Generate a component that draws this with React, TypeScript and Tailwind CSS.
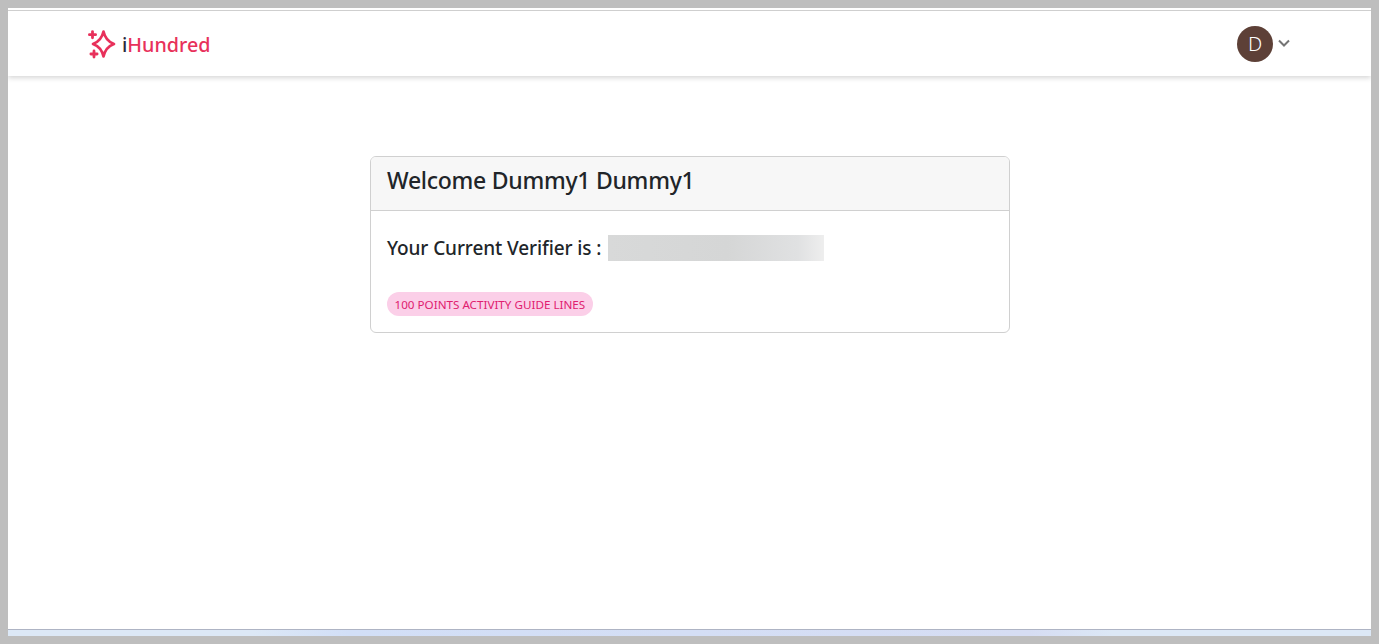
export default function App() {
  return (
    <div className="h-[644px] w-full border-8 border-[#bebebe] bg-white flex flex-col overflow-hidden font-['Noto_Sans',sans-serif] text-[#212529]">
      <header className="h-[68px] shrink-0 bg-white pt-[2px] shadow-[0_2px_5px_rgba(0,0,0,0.16)] relative z-10">
        <div className="border-t border-[#cfcfcf] h-[66px] pl-[79px] pr-[81px] flex items-center justify-between">
          <div className="flex items-center gap-[5px] text-[#e8315b]">
            <svg width="30" height="30" viewBox="0 0 30 30" fill="none" className="shrink-0">
              <path d="M16.5 2.5 C17.8 8.5 21 12.8 27 15 C21 17.2 17.8 21.5 16.5 27.5 C15.2 21.5 12 17.2 6 15 C12 12.8 15.2 8.5 16.5 2.5 Z" stroke="#e8315b" strokeWidth="2.7" strokeLinejoin="round" />
              <path d="M5.5 2.6 V8.8 M2.4 5.7 H8.6" stroke="#e8315b" strokeWidth="2.8" strokeLinecap="round" />
              <path d="M7 21.9 V28.1 M3.9 25 H10.1" stroke="#e8315b" strokeWidth="2.8" strokeLinecap="round" />
            </svg>
            <span className="text-[19.7px] leading-none font-medium mt-[3px]"><span className="text-[#2a2a3c]">i</span>Hundred</span>
          </div>
          <div className="flex items-center gap-[5px] mt-[1px]">
            <div className="w-9 h-9 rounded-full bg-[#5d4037] text-white flex items-center justify-center text-[20px] font-light">D</div>
            <svg width="12" height="8" viewBox="0 0 12 8" fill="none" className="-mt-[2px]">
              <path d="M1 1.5 L6 6.5 L11 1.5" stroke="#757575" strokeWidth="2" />
            </svg>
          </div>
        </div>
      </header>
      <main className="flex-1 flex flex-col items-center pt-[80px]">
        <section className="w-[640px] border border-[#d0d0d0] rounded-[6px] overflow-hidden bg-white">
          <div className="h-[54px] bg-[#f7f7f7] border-b border-[#d0d0d0] pl-[16.5px] pr-4 pb-[6px] flex items-center">
            <h1 className="text-[23px] tracking-[-0.27px] font-medium leading-none">Welcome Dummy1 Dummy1</h1>
          </div>
          <div className="px-4 pt-[24px] pb-[16px]">
            <div className="flex items-center h-[26px]">
              <span className="text-[19px] tracking-[-0.1px] font-medium w-[221px] pl-[0.5px]">Your Current Verifier is :</span>
              <div className="w-[216px] h-[26px] bg-[linear-gradient(90deg,#d8d9d9,#d5d6d6_55%,#e0e1e2_88%,#eeeeee)]"></div>
            </div>
            <div className="mt-[31px] flex">
              <span className="inline-flex items-center h-[24px] pt-[1px] px-2 rounded-full bg-[#fbcfe8] text-[#e0206f] text-[11.66px]">100 POINTS ACTIVITY GUIDE LINES</span>
            </div>
          </div>
        </section>
      </main>
      <footer className="h-[7px] shrink-0 border-t border-[#aeb4c4] bg-[linear-gradient(90deg,#dce8f6_18%,#d2dff7_25%,#d6ddf3_75%,#dce8f6_81%)]"></footer>
    </div>
  );
}
